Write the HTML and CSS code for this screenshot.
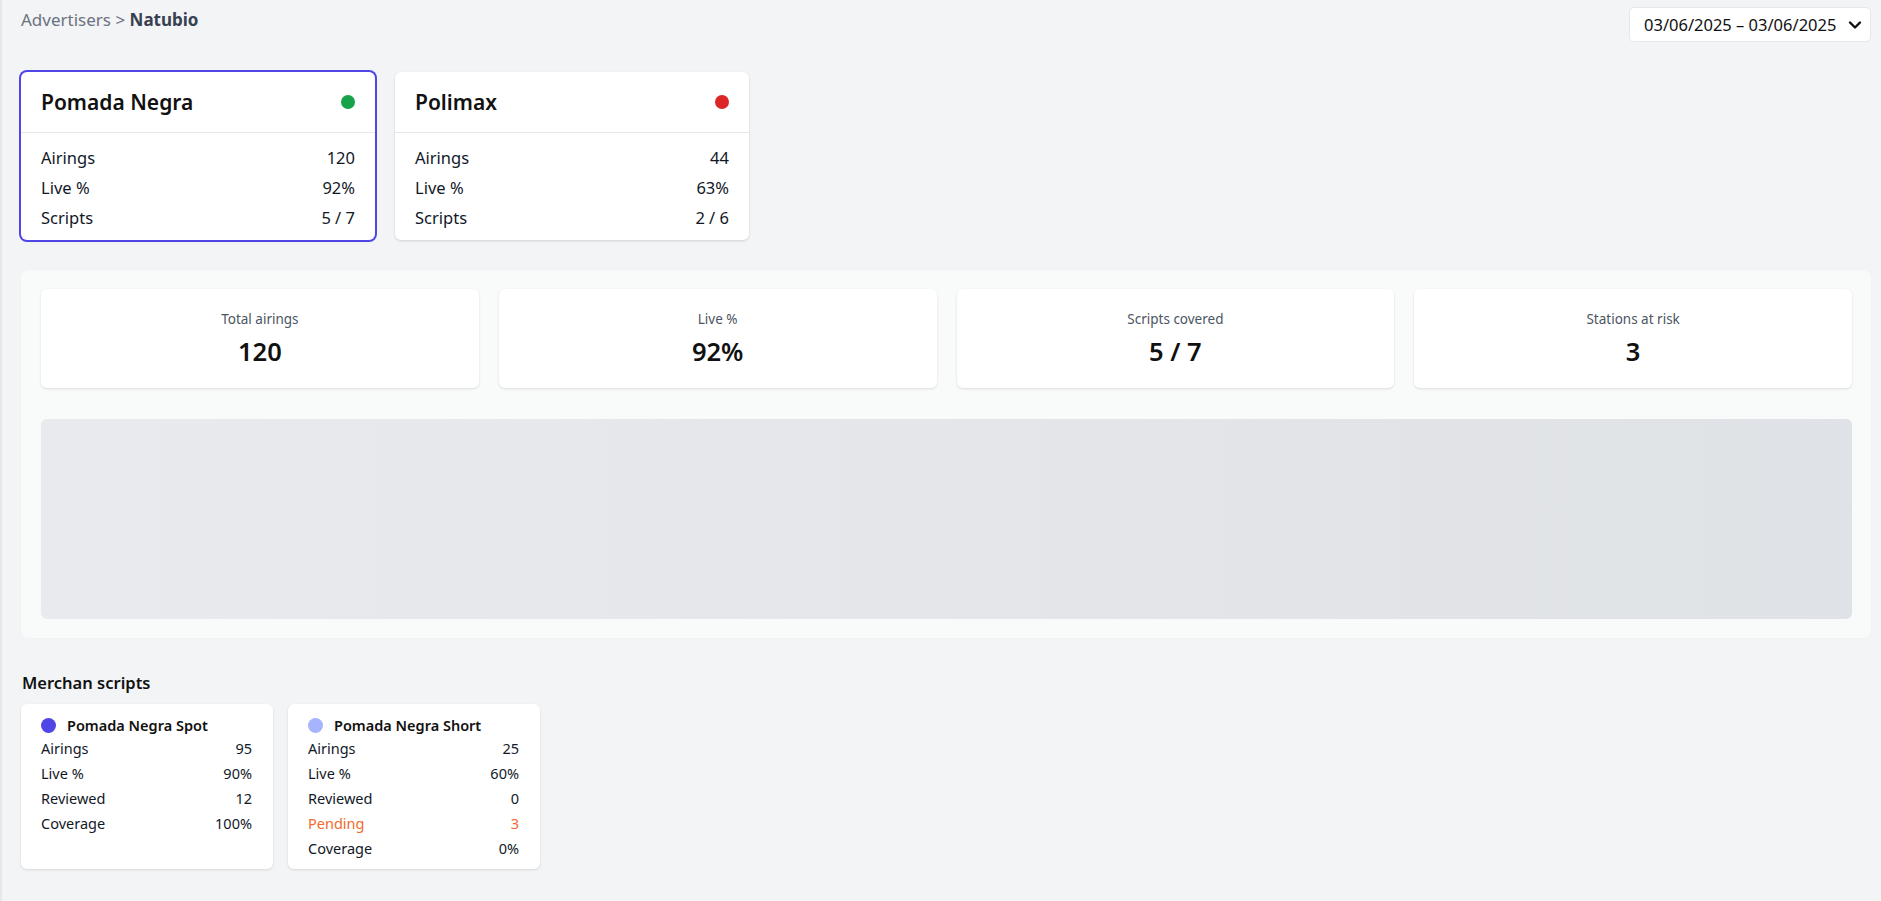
FILE: index.html
```html
<!DOCTYPE html>
<html lang="en">
<head>
<meta charset="utf-8">
<title>Natubio</title>
<link rel="stylesheet" href="styles.css">
</head>
<body>
<div class="page">
  <div class="topbar">
    <div class="crumbs"><span>Advertisers</span> &gt; <strong>Natubio</strong></div>
    <div class="date-select">
      <span>03/06/2025 – 03/06/2025</span>
      <svg class="chev" width="14" height="10" viewBox="0 0 14 10"><path d="M2 2.5 L7 7.5 L12 2.5" fill="none" stroke="#111" stroke-width="2.4" stroke-linecap="round" stroke-linejoin="round"/></svg>
    </div>
  </div>

  <div class="product-row">
    <div class="product-card active">
      <div class="pc-head"><span class="pc-title">Pomada Negra</span><span class="dot green"></span></div>
      <div class="pc-body">
        <div class="kv"><span>Airings</span><span>120</span></div>
        <div class="kv"><span>Live %</span><span>92%</span></div>
        <div class="kv"><span>Scripts</span><span>5 / 7</span></div>
      </div>
    </div>
    <div class="product-card">
      <div class="pc-head"><span class="pc-title">Polimax</span><span class="dot red"></span></div>
      <div class="pc-body">
        <div class="kv"><span>Airings</span><span>44</span></div>
        <div class="kv"><span>Live %</span><span>63%</span></div>
        <div class="kv"><span>Scripts</span><span>2 / 6</span></div>
      </div>
    </div>
  </div>

  <div class="stats-panel">
    <div class="stat-grid">
      <div class="stat-card"><div class="stat-label">Total airings</div><div class="stat-value">120</div></div>
      <div class="stat-card"><div class="stat-label">Live %</div><div class="stat-value">92%</div></div>
      <div class="stat-card"><div class="stat-label">Scripts covered</div><div class="stat-value">5 / 7</div></div>
      <div class="stat-card"><div class="stat-label">Stations at risk</div><div class="stat-value">3</div></div>
    </div>
    <div class="chart"></div>
  </div>

  <h2 class="section-title">Merchan scripts</h2>
  <div class="script-row">
    <div class="script-card">
      <div class="sc-head"><span class="sdot indigo"></span><span>Pomada Negra Spot</span></div>
      <div class="skv"><span>Airings</span><span>95</span></div>
      <div class="skv"><span>Live %</span><span>90%</span></div>
      <div class="skv"><span>Reviewed</span><span>12</span></div>
      <div class="skv"><span>Coverage</span><span>100%</span></div>
    </div>
    <div class="script-card">
      <div class="sc-head"><span class="sdot light"></span><span>Pomada Negra Short</span></div>
      <div class="skv"><span>Airings</span><span>25</span></div>
      <div class="skv"><span>Live %</span><span>60%</span></div>
      <div class="skv"><span>Reviewed</span><span>0</span></div>
      <div class="skv pending"><span>Pending</span><span>3</span></div>
      <div class="skv"><span>Coverage</span><span>0%</span></div>
    </div>
  </div>
</div>
</body>
</html>
```

FILE: styles.css
```css
* { box-sizing: border-box; }

body {
  margin: 0;
  min-height: 100vh;
  background: #f3f4f6;
  border-left: 2px solid #e6e7ea;
  font-family: "Noto Sans", "Open Sans", sans-serif;
  color: #111827;
}

.page {
  padding: 7px 10px 20px 19px;
}

.topbar {
  display: flex;
  justify-content: space-between;
  align-items: flex-start;
}

.crumbs {
  margin-top: 1px;
  font-size: 17px;
  line-height: 24px;
  color: #6b7280;
}
.crumbs strong {
  color: #374151;
  font-weight: 700;
}

.date-select {
  width: 242px;
  height: 35px;
  display: flex;
  align-items: center;
  justify-content: space-between;
  padding: 0 8px 0 14px;
  background: #fff;
  border: 1px solid #e5e7eb;
  border-radius: 5px;
  font-size: 16.5px;
  color: #111;
}
.chev { display: block; }

.product-row {
  display: flex;
  gap: 20px;
  margin-top: 30px;
  align-items: flex-start;
}

.product-card {
  width: 354px;
  background: #fff;
  border-radius: 6px;
  box-shadow: 0 1px 3px rgba(0,0,0,0.10), 0 1px 2px rgba(0,0,0,0.05);
}
.product-card.active {
  box-shadow: 0 0 0 2px #4f46e5, 0 1px 3px rgba(0,0,0,0.10);
}

.pc-head {
  display: flex;
  justify-content: space-between;
  align-items: center;
  padding: 16px 20px;
  border-bottom: 1px solid #e5e7eb;
}
.pc-title {
  font-size: 21px;
  line-height: 28px;
  font-weight: 600;
  color: #111;
}

.dot {
  width: 14px;
  height: 14px;
  border-radius: 50%;
}
.dot.green { background: #16a34a; }
.dot.red { background: #dc2626; }

.pc-body {
  padding: 13px 20px 10px;
  display: flex;
  flex-direction: column;
  gap: 6px;
}
.kv {
  display: flex;
  justify-content: space-between;
  font-size: 16.5px;
  line-height: 24px;
}

.stats-panel {
  margin-top: 30px;
  background: #f9fafa;
  border-radius: 8px;
  padding: 19px 19px 19px 20px;
  box-shadow: 0 0 2px rgba(0,0,0,0.03);
}

.stat-grid {
  display: grid;
  grid-template-columns: repeat(4, 1fr);
  gap: 20px;
}

.stat-card {
  background: #fff;
  border-radius: 6px;
  padding: 20px 16px 19px;
  text-align: center;
  box-shadow: 0 1px 3px rgba(0,0,0,0.09), 0 1px 2px rgba(0,0,0,0.04);
}
.stat-label {
  font-size: 13.5px;
  line-height: 20px;
  color: #4b5563;
  margin-bottom: 4px;
}
.stat-value {
  font-size: 25.5px;
  line-height: 36px;
  font-weight: 600;
  color: #111;
}

.chart {
  margin-top: 31px;
  height: 200px;
  border-radius: 6px;
  background: linear-gradient(90deg, #e9eaed 0%, #e4e6e9 50%, #dfe2e6 100%);
}

.section-title {
  margin: 33px 0 9px 1px;
  font-size: 16.5px;
  line-height: 24px;
  font-weight: 600;
  color: #111;
}

.script-row {
  display: flex;
  gap: 15px;
}

.script-card {
  width: 252px;
  background: #fff;
  border-radius: 6px;
  padding: 10px 21px 8px 20px;
  box-shadow: 0 1px 3px rgba(0,0,0,0.09), 0 1px 2px rgba(0,0,0,0.04);
}

.sc-head {
  display: flex;
  align-items: center;
  gap: 11px;
  font-size: 14.5px;
  line-height: 22px;
  font-weight: 600;
  color: #111;
}
.sdot {
  width: 15px;
  height: 15px;
  border-radius: 50%;
  flex: none;
}
.sdot.indigo { background: #4f46e5; }
.sdot.light { background: #a5b4fc; }

.skv {
  display: flex;
  justify-content: space-between;
  font-size: 14.5px;
  line-height: 25px;
}
.skv.pending { color: #f26a2e; }
```
